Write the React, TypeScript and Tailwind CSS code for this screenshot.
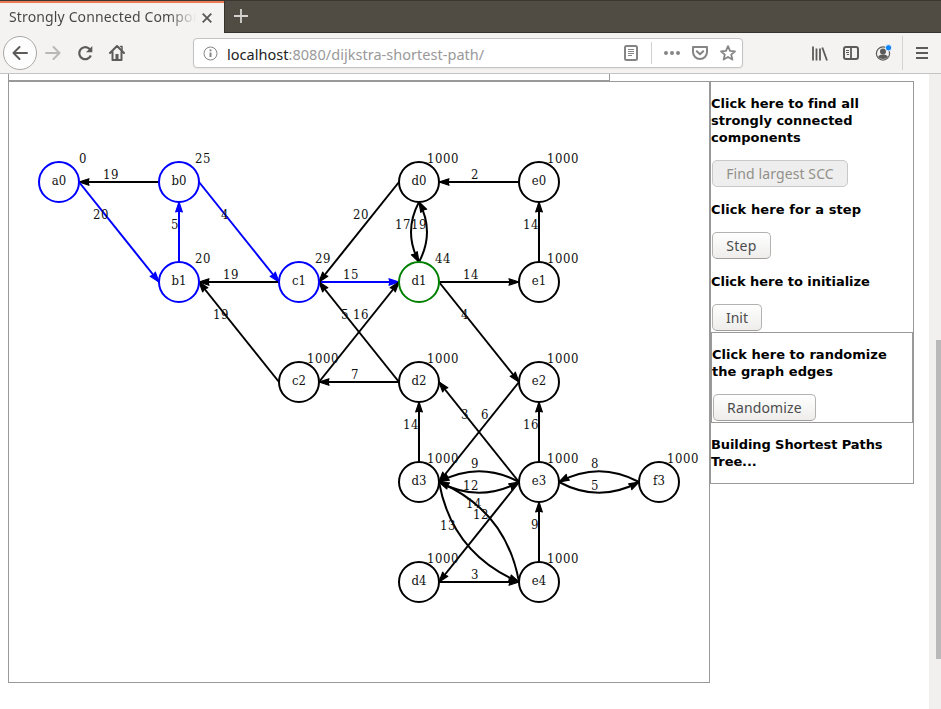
import React from 'react';

type Pt = [number, number];

const BLACK = '#000000';
const BLUE = '#0000ff';
const GREEN = '#008000';

const nodes: { id: string; x: number; y: number; dist: string; color: string }[] = [
  { id: 'a0', x: 50, y: 100, dist: '0', color: BLUE },
  { id: 'b0', x: 170, y: 100, dist: '25', color: BLUE },
  { id: 'd0', x: 410, y: 100, dist: '1000', color: BLACK },
  { id: 'e0', x: 530, y: 100, dist: '1000', color: BLACK },
  { id: 'b1', x: 170, y: 200, dist: '20', color: BLUE },
  { id: 'c1', x: 290, y: 200, dist: '29', color: BLUE },
  { id: 'd1', x: 410, y: 200, dist: '44', color: GREEN },
  { id: 'e1', x: 530, y: 200, dist: '1000', color: BLACK },
  { id: 'c2', x: 290, y: 300, dist: '1000', color: BLACK },
  { id: 'd2', x: 410, y: 300, dist: '1000', color: BLACK },
  { id: 'e2', x: 530, y: 300, dist: '1000', color: BLACK },
  { id: 'd3', x: 410, y: 400, dist: '1000', color: BLACK },
  { id: 'e3', x: 530, y: 400, dist: '1000', color: BLACK },
  { id: 'f3', x: 650, y: 400, dist: '1000', color: BLACK },
  { id: 'd4', x: 410, y: 500, dist: '1000', color: BLACK },
  { id: 'e4', x: 530, y: 500, dist: '1000', color: BLACK },
];

const edges: { from: Pt; to: Pt; ctrl?: Pt; w: string; at: Pt; color?: string }[] = [
  { from: [150, 100], to: [70, 100], w: '19', at: [94, 97] },
  { from: [70, 100], to: [150, 200], w: '20', at: [84, 137], color: BLUE },
  { from: [170, 180], to: [170, 120], w: '5', at: [162, 147], color: BLUE },
  { from: [190, 100], to: [270, 200], w: '4', at: [212, 137], color: BLUE },
  { from: [270, 200], to: [190, 200], w: '19', at: [214, 197] },
  { from: [310, 200], to: [390, 200], w: '15', at: [334, 197], color: BLUE },
  { from: [390, 100], to: [310, 200], w: '20', at: [344, 137] },
  { from: [510, 100], to: [430, 100], w: '2', at: [462, 97] },
  { from: [410, 120], to: [410, 180], ctrl: [394, 150], w: '17', at: [386, 147] },
  { from: [410, 180], to: [410, 120], ctrl: [426, 150], w: '19', at: [402, 147] },
  { from: [430, 200], to: [510, 200], w: '14', at: [454, 197] },
  { from: [530, 180], to: [530, 120], w: '14', at: [514, 147] },
  { from: [270, 300], to: [190, 200], w: '19', at: [204, 237] },
  { from: [390, 300], to: [310, 200], w: '5', at: [332, 237] },
  { from: [310, 300], to: [390, 200], w: '16', at: [344, 237] },
  { from: [390, 300], to: [310, 300], w: '7', at: [342, 297] },
  { from: [430, 200], to: [510, 300], w: '4', at: [452, 237] },
  { from: [510, 300], to: [430, 400], w: '6', at: [472, 337] },
  { from: [510, 400], to: [430, 300], w: '3', at: [452, 337] },
  { from: [410, 380], to: [410, 320], w: '14', at: [394, 347] },
  { from: [530, 380], to: [530, 320], w: '16', at: [514, 347] },
  { from: [510, 400], to: [430, 400], ctrl: [470, 378.5], w: '9', at: [462, 386] },
  { from: [430, 400], to: [510, 400], ctrl: [470, 421.5], w: '12', at: [454, 408] },
  { from: [630, 400], to: [550, 400], ctrl: [590, 378.5], w: '8', at: [582, 386] },
  { from: [550, 400], to: [630, 400], ctrl: [590, 421.5], w: '5', at: [582, 408] },
  { from: [510, 500], to: [430, 400], ctrl: [497, 428.5], w: '14', at: [457, 426] },
  { from: [430, 400], to: [510, 500], ctrl: [443, 471.5], w: '13', at: [431, 448] },
  { from: [510, 400], to: [430, 500], w: '12', at: [464, 437] },
  { from: [430, 500], to: [510, 500], w: '3', at: [462, 497] },
  { from: [530, 480], to: [530, 420], w: '9', at: [522, 447] },
];

function Graph() {
  return (
    <svg width="700" height="600" viewBox="0 0 700 600" className="block">
      {edges.map(({ from, to, ctrl, color = BLACK }, i) => {
        const base = ctrl ?? from;
        const angle = (Math.atan2(to[1] - base[1], to[0] - base[0]) * 180) / Math.PI;
        const d = ctrl
          ? `M${from[0]} ${from[1]}Q${ctrl[0]} ${ctrl[1]} ${to[0]} ${to[1]}`
          : `M${from[0]} ${from[1]}L${to[0]} ${to[1]}`;
        return (
          <g key={i}>
            <path d={d} fill="none" stroke={color} strokeWidth="2" />
            <path
              d="M0 0L-10 -3.3L-9 0L-10 3.3Z"
              fill={color}
              stroke={color}
              strokeWidth="1.2"
              strokeLinejoin="round"
              transform={`translate(${to[0]} ${to[1]}) rotate(${angle})`}
            />
          </g>
        );
      })}
      {nodes.map((n) => (
        <circle key={n.id} cx={n.x} cy={n.y} r="20" fill="none" stroke={n.color} strokeWidth="2" />
      ))}
      <g className="font-['DejaVu_Serif_Condensed','DejaVu_Serif',serif] text-[13px]" fill="#111">
        {nodes.map((n) => (
          <g key={n.id}>
            <text x={n.x} y={n.y + 3} textAnchor="middle">{n.id}</text>
            <text x={n.x + 24 - 4 * n.dist.length} y={n.y - 19} className="tracking-[0.55px]">{n.dist}</text>
          </g>
        ))}
        {edges.map((e, i) => (
          <text key={i} x={e.at[0]} y={e.at[1]} className="tracking-[0.55px]">{e.w}</text>
        ))}
      </g>
    </svg>
  );
}

function Button({ className, disabled, children }: { className: string; disabled?: boolean; children: React.ReactNode }) {
  return (
    <button
      disabled={disabled}
      className={`flex h-[27px] items-center justify-center whitespace-nowrap rounded-[5px] border font-['Noto_Sans','Open_Sans',sans-serif] text-[14px] ${
        disabled
          ? 'border-[#c8c8c8] bg-[#eeeeee] text-[#929089]'
          : 'border-[#b3b2b0] border-b-[#a09f9d] bg-linear-to-b from-white to-[#eeedec] text-[#4c4c4c]'
      } ${className}`}
    >
      {children}
    </button>
  );
}

function Label({ className = '', children }: { className?: string; children: React.ReactNode }) {
  return <p className={`whitespace-nowrap text-[13px] font-bold leading-[17px] text-black ${className}`}>{children}</p>;
}

function Toolbar() {
  return (
    <div className="flex h-[41px] items-center border-b border-[#c4c4c4] bg-[#f4f3f2] text-[#5c5b5a]">
      <div className="ml-[3px] flex size-[34px] items-center justify-center rounded-full border border-[#a9a8a6] bg-[#fdfdfd]">
        <svg width="16" height="16" viewBox="0 0 16 16" fill="none" stroke="currentColor" strokeWidth="2" strokeLinecap="round" strokeLinejoin="round"><path d="M15 8H2M7.500 2L1.500 8l6 6" /></svg>
      </div>
      <svg className="ml-2 text-[#b9b8b7]" width="16" height="16" viewBox="0 0 16 16" fill="none" stroke="currentColor" strokeWidth="2" strokeLinecap="round" strokeLinejoin="round"><path d="M1 8h13M8.500 2l6 6-6 6" /></svg>
      <svg className="ml-4" width="16" height="16" viewBox="0 0 16 16" fill="none" stroke="currentColor" strokeWidth="2.200"><path d="M13.800 10.500A6 6 0 1 1 12 3.500l1.500 1.500" /><path d="M15.300 1v6.300H9z" fill="currentColor" stroke="none" /></svg>
      <svg className="ml-4" width="16" height="16" viewBox="0 0 16 16" fill="none" stroke="currentColor" strokeWidth="2" strokeLinejoin="round" strokeLinecap="round"><path d="M1 8l7-7 7 7M3.500 7v8h9V7" /><path d="M11.500 1.500H13V5" strokeWidth="1.500" /><path d="M6.500 9h3v6h-3z" fill="currentColor" stroke="none" /></svg>
      <div className="ml-[68px] flex h-[30px] w-[550px] items-center rounded-[4px] border border-[#c5c3c1] bg-white text-[#858585] shadow-xs">
        <svg className="ml-[9px] shrink-0" width="15" height="15" viewBox="0 0 15 15" fill="none" stroke="currentColor"><circle cx="7.500" cy="7.500" r="6.500" /><path d="M7.500 6.500V11" strokeWidth="2" /><circle cx="7.500" cy="4.300" r="1.100" fill="currentColor" stroke="none" /></svg>
        <span className="ml-[9px] w-[264px] whitespace-nowrap pt-0.5 font-['Noto_Sans','Open_Sans',sans-serif] text-[14.500px] leading-[20px] tracking-[0.03px] text-[#999]"><span className="text-[#222]">localhost</span>:8080/dijkstra-shortest-path/</span>
        <svg className="ml-[133px] shrink-0" width="14" height="16" viewBox="0 0 14 16" fill="none" stroke="currentColor"><rect x="1" y="1" width="12" height="14" rx="1.500" strokeWidth="2" /><path d="M4 4.500h6M4 6.500h6M4 8.500h6M4 10.500h4" /></svg>
        <div className="ml-[13px] h-[22px] w-px bg-[#d0d0d0]" />
        <svg className="ml-3 shrink-0" width="16" height="4" viewBox="0 0 16 4" fill="currentColor"><circle cx="2" cy="2" r="2" /><circle cx="8" cy="2" r="2" /><circle cx="14" cy="2" r="2" /></svg>
        <svg className="ml-3 shrink-0" width="16" height="16" viewBox="0 0 16 16" fill="none" stroke="currentColor" strokeWidth="2" strokeLinecap="round" strokeLinejoin="round"><path d="M1 2h14v5a7 7 0 0 1-14 0zM4.800 6.200L8 9.300l3.200-3.100" /></svg>
        <svg className="ml-3 shrink-0" width="16" height="16" viewBox="0 0 16 16" fill="none" stroke="currentColor" strokeWidth="1.800" strokeLinejoin="round"><path d="M8 1.200l2 4.600 5 .500-3.800 3.300 1.200 5L8 12l-4.400 2.600 1.200-5L1 6.300l5-.500z" /></svg>
      </div>
      <svg className="ml-[69px]" width="16" height="15" viewBox="0 0 16 15" fill="none" stroke="currentColor" strokeWidth="1.800"><path d="M1 .5v14M4.500 2.500v12M8 2.500v12M10.300 1.500l4.700 13" /></svg>
      <svg className="ml-[15px]" width="16" height="14" viewBox="0 0 16 14" fill="none" stroke="currentColor"><rect x="1" y="1" width="14" height="12" rx="2" strokeWidth="2" /><path d="M8 1v12" strokeWidth="1.800" /><path d="M3 4.500h3M3 6.500h3M3.800 8.500H6" /></svg>
      <svg className="ml-4" width="18" height="18" viewBox="0 0 18 18" fill="none"><circle cx="8" cy="9.500" r="6.600" stroke="currentColor" strokeWidth="1.200" /><circle cx="8" cy="7.500" r="3" fill="currentColor" /><path d="M3 13c1-2 3-2.500 5-2.500s4 .5 5 2.500c-2.500 2.500-7.500 2.500-10 0z" fill="currentColor" /><circle cx="13.500" cy="3.800" r="3.200" fill="#0a84ff" stroke="#f4f3f2" /></svg>
      <div className="ml-[9px] h-[34px] w-px bg-[#d4d3d2]" />
      <svg className="ml-[13px]" width="12" height="12" viewBox="0 0 12 12" stroke="currentColor" strokeWidth="2"><path d="M0 1h12M0 6h12M0 11h12" /></svg>
    </div>
  );
}

export default function App() {
  return (
    <div className="flex h-[709px] w-[941px] flex-col overflow-hidden bg-white font-['DejaVu_Sans',sans-serif]">
      <div className="flex h-[33px] border-t border-[#3a3733] bg-[#504c44]">
        <div className="flex h-8 w-[224px] shrink-0 items-center border-t-2 border-[#ec7b53] bg-[#f4f3f2] pl-[9px] text-[#4a4a4a]">
          <span className="w-[187px] overflow-hidden whitespace-nowrap bg-linear-to-r from-[#444] from-85% to-transparent to-100% bg-clip-text pb-0.5 font-['Noto_Sans','Open_Sans',sans-serif] text-[14px] leading-[20px] tracking-[0.14px] text-transparent">Strongly Connected Components</span>
          <svg className="ml-[6px]" width="10" height="10" viewBox="0 0 10 10" fill="none" stroke="#585756" strokeWidth="1.800"><path d="M.7.7l8.600 8.600M9.300.7L.7 9.300" /></svg>
        </div>
        <div className="flex flex-1 items-center border-b border-l border-[#36332f] pb-px pl-[9px]">
          <svg width="14" height="14" viewBox="0 0 14 14" stroke="#d5d3cf" strokeWidth="1.800"><path d="M7 0v14M0 7h14" /></svg>
        </div>
      </div>
      <Toolbar />
      <div className="flex min-h-0 flex-1">
        <div className="w-[929px] pl-2">
          <div className="h-[7px] w-[602px] border-x border-b border-[#999]" />
          <div className="flex items-start">
            <div className="h-[602px] w-[702px] shrink-0 border border-[#999]">
              <Graph />
            </div>
            <div className="h-[403px] w-[204px] border border-[#999] pt-[13px]">
              <Label className="tracking-[0.01px]">Click here to find all<br />strongly connected<br />components</Label>
              <Button disabled className="ml-px mt-[14px] w-[136px] tracking-[0.1px]">Find largest SCC</Button>
              <div className="h-[14px]" />
              <Label className="tracking-[0.1px]">Click here for a step</Label>
              <Button className="ml-px mt-[14px] w-[59px] tracking-[0.3px]">Step</Button>
              <div className="h-[14px]" />
              <Label className="tracking-[-0.04px]">Click here to initialize</Label>
              <Button className="ml-px mt-[14px] w-[50px]">Init</Button>
              <div className="mt-px h-[91px] w-[202px] border border-[#999] pt-[13px]">
                <Label className="tracking-[0.04px]">Click here to randomize<br />the graph edges</Label>
                <Button className="ml-px mt-[14px] w-[103px] tracking-[0.15px]">Randomize</Button>
              </div>
              <div className="h-[13px]" />
              <Label className="tracking-[-0.09px]">Building Shortest Paths<br />Tree...</Label>
            </div>
          </div>
        </div>
        <div className="flex w-3 justify-end bg-[#f1f0ef] pt-[266px]">
          <div className="h-[319px] w-[5px] bg-[#b9b9b9]" />
        </div>
      </div>
    </div>
  );
}
